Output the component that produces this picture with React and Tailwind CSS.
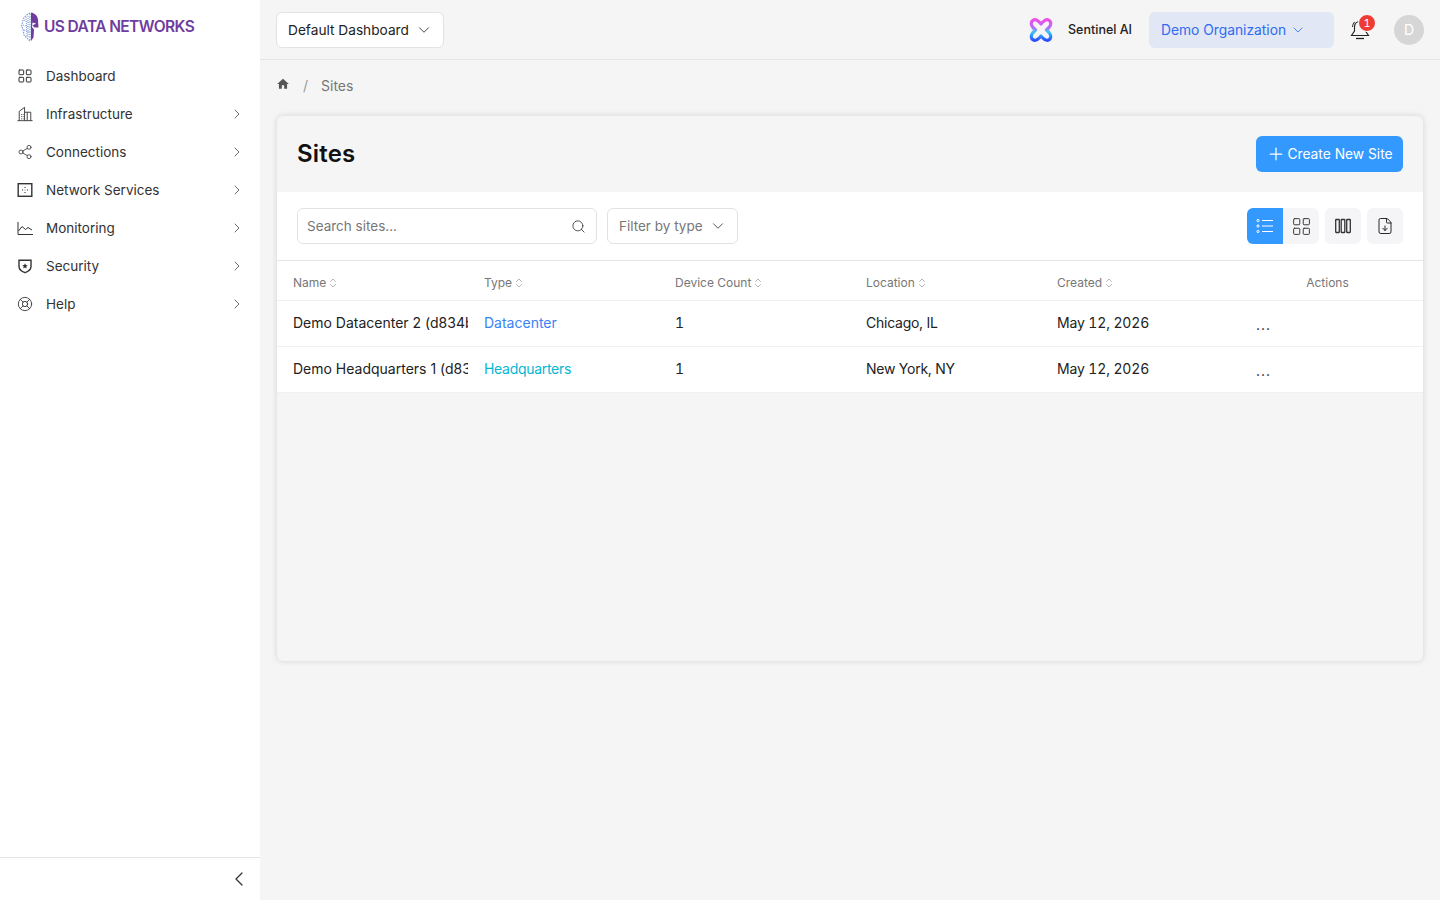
import React from 'react';
import {
  ChevronDown,
  ChevronRight,
  ChevronLeft,
  LayoutGrid,
  Share2,
  LifeBuoy,
  Search,
  Plus,
  FileDown,
  ChevronsUpDown,
} from 'lucide-react';

const font = 'font-["Inter","Noto_Sans",sans-serif]';

const BuildingIcon = () => (
  <svg width="18" height="18" viewBox="0 0 18 18" fill="none" stroke="#333" strokeWidth="1">
    <path d="M0.5 16.5h17" />
    <path d="M2.5 16.500V6L8.500 1.500v15" />
    <path d="M8.500 7h7v9.500" />
    <path d="M11.500 7v9.500" />
    <path d="M4.500 9.500h1M6.500 9.500h1M4.500 12h1M6.500 12h1M4.500 14.500h1M6.500 14.500h1" />
  </svg>
);

const ServicesIcon = () => (
  <svg width="16" height="16" viewBox="0 0 16 16" fill="none" stroke="#333" strokeWidth="1.4">
    <rect x="1.200" y="1.700" width="13.600" height="12.600" />
    <path d="M8 5v1M8 10v1M5 8h1M10 8h1M7.700 8h.6" strokeWidth="1.100" />
  </svg>
);

const ShieldIcon = () => (
  <svg width="16" height="16" viewBox="0 0 16 16" fill="none" stroke="#333" strokeWidth="1.400">
    <path d="M2 2.200h12v6.300c0 3-2.600 4.900-6 6.200-3.400-1.300-6-3.200-6-6.200z" />
    <path d="M8 5.300l.8 1.800 1.900.2-1.400 1.300.4 1.900L8 9.500l-1.700 1 .4-1.900-1.400-1.300 1.900-.2z" fill="#333" stroke="none" />
  </svg>
);

const MonitorIcon = () => (
  <svg width="16" height="16" viewBox="0 0 16 16" fill="none" stroke="#333" strokeWidth="1">
    <path d="M1 2v12.500h15" />
    <path d="M1.500 11L5 6.500l3.500 3L11 7.500l4 2.500" />
  </svg>
);

const HomeIcon = () => (
  <svg width="14" height="14" viewBox="0 0 24 24" fill="#555">
    <path d="M10 20v-6h4v6h5v-8h3L12 3 2 12h3v8z" />
  </svg>
);

const ListIcon = () => (
  <svg width="18" height="18" viewBox="0 0 18 18" fill="none" stroke="#fff" strokeWidth="1">
    <circle cx="2" cy="3.500" r="1.100" />
    <circle cx="2" cy="9" r="1.100" />
    <circle cx="2" cy="14.500" r="1.100" />
    <path d="M6 3.500h11M6 9h11M6 14.500h11" />
  </svg>
);

const Columns3Icon = () => (
  <svg width="18" height="18" viewBox="0 0 18 18" fill="none" stroke="#333" strokeWidth="1.300">
    <rect x="1.700" y="2.500" width="3.600" height="13" rx="0.500" />
    <rect x="7.200" y="2.500" width="3.600" height="13" rx="0.500" />
    <rect x="12.700" y="2.500" width="3.600" height="13" rx="0.500" />
  </svg>
);

const BellIcon = () => (
  <svg width="22" height="22" viewBox="0 0 22 22" fill="none" stroke="#222" strokeWidth="1.100">
    <path d="M11 2.500c-3.500 0-5.500 2.500-5.500 6v3.500L2.500 16.500h17L16.500 12V8.500c0-3.500-2-6-5.500-6z" />
    <path d="M7 19.500h8" strokeWidth="1.300" />
    <path d="M3.500 8c0-2 .8-3.500 2-5" />
  </svg>
);

const LogoMark = () => (
  <svg width="20" height="30" viewBox="0 0 20 30">
    <path d="M10 1C6 3 3 6 2.500 10l-1 4 1.500 3 1 6 6 6z" fill="none" stroke="#7f9ada" strokeWidth="1.200" strokeDasharray="1.500 1" />
    <path d="M4 8l5 3M3 13l6 2M4 18l5 2M6 5l1 19M8 4v22" stroke="#7f9ada" strokeWidth="1" strokeDasharray="1 1" fill="none" />
    <path d="M11 0.500c3.500.5 6.500 3 7 7l.5 8h-4l-2-2 3.500-2-3.500-1-.5 4.500 2 2.500-.5 8L11 29z" fill="#6f3d9e" />
  </svg>
);

const SentinelMark = () => (
  <svg width="26" height="26" viewBox="0 0 26 26" fill="none">
    <defs>
      <linearGradient id="sentinelGrad" x1="0.500" y1="0" x2="0.500" y2="1">
        <stop offset="0" stopColor="#f04fe6" />
        <stop offset="0.4" stopColor="#b46bff" />
        <stop offset="0.6" stopColor="#38c8f5" />
        <stop offset="1" stopColor="#2b4dff" />
      </linearGradient>
    </defs>
    <path
      d="M5.500 3c2.500-1.200 4.500.5 7.500 4 3-3.500 5-5.200 7.500-4 2.800 1.400 3 4.500.5 7.500L18.500 13l2.500 2.500c2.500 3 2.300 6.100-.5 7.500-2.500 1.200-4.500-.5-7.500-4-3 3.500-5 5.200-7.500 4-2.800-1.400-3-4.500-.5-7.500L7.500 13 5 10.500C2.500 7.500 2.700 4.400 5.500 3z"
      stroke="url(#sentinelGrad)"
      strokeWidth="3.200"
      strokeLinejoin="round"
    />
  </svg>
);

const navItems = [
  { label: 'Dashboard', icon: <LayoutGrid size={16} strokeWidth={1.5} color="#333" /> },
  { label: 'Infrastructure', icon: <BuildingIcon />, more: true },
  { label: 'Connections', icon: <Share2 size={18} strokeWidth={1.2} color="#333" />, more: true },
  { label: 'Network Services', icon: <ServicesIcon />, more: true },
  { label: 'Monitoring', icon: <MonitorIcon />, more: true },
  { label: 'Security', icon: <ShieldIcon />, more: true },
  { label: 'Help', icon: <LifeBuoy size={18} strokeWidth={1.3} color="#333" />, more: true },
];

const columns = ['Name', 'Type', 'Device Count', 'Location', 'Created'];

const sites = [
  {
    name: 'Demo Datacenter 2 (d834b1c7)',
    type: 'Datacenter',
    typeClass: 'text-[#3b82f6]',
    count: 1,
    location: 'Chicago, IL',
    created: 'May 12, 2026',
  },
  {
    name: 'Demo Headquarters 1 (d83a20f4)',
    type: 'Headquarters',
    typeClass: 'text-[#06b6d4] tracking-[-0.3px]',
    count: 1,
    location: 'New York, NY',
    created: 'May 12, 2026',
  },
];

const Sidebar = () => (
  <aside className="w-[260px] shrink-0 h-full bg-white flex flex-col">
    <div className="h-[57px] pl-[20px] pb-[5px] pt-[1px] flex items-center gap-[4px]">
      <LogoMark />
      <span className="text-[15.500px] font-semibold text-[#6f3d9e] tracking-[-0.6px]">US DATA NETWORKS</span>
    </div>
    <nav className="flex-1 flex flex-col">
      {navItems.map((item) => (
        <div key={item.label} className="h-[38px] pl-[17px] pr-[15px] flex items-center text-[#333] text-[13.500px]">
          <span className="w-[16px] flex justify-center">{item.icon}</span>
          <span className="ml-[13px] flex-1">{item.label}</span>
          {item.more && <ChevronRight size={16} strokeWidth={1.200} color="#444" />}
        </div>
      ))}
    </nav>
    <div className="h-[43px] border-t border-[#e5e5e5] flex items-center justify-end pr-[9px]">
      <ChevronLeft size={24} strokeWidth={1.300} color="#333" />
    </div>
  </aside>
);

const Header = () => (
  <header className="h-[60px] shrink-0 border-b border-[#e5e5e5] pl-[16px] pr-[16px] flex items-center">
    <button className="h-[36px] w-[168px] pl-[11px] pr-[10px] pt-[1px] bg-white border border-[#e2e2e2] rounded-md flex items-center justify-between text-[13.700px] text-[#222]">
      Default Dashboard
      <ChevronDown size={18} strokeWidth={1.200} color="#333" />
    </button>
    <div className="ml-auto flex items-center">
      <SentinelMark />
      <span className="ml-[14px] mt-[1px] text-[12.500px] font-medium text-[#222]">Sentinel AI</span>
      <button className="ml-[17px] h-[36px] w-[185px] pl-[12px] pt-[1px] bg-[#e1e7f5] rounded-md flex items-center gap-[4px] text-[13.800px] text-[#2f6bf0]">
        Demo Organization
        <ChevronDown size={16} strokeWidth={1.200} />
      </button>
      <div className="relative ml-[15px] w-[22px] h-[22px] mt-[1px]">
        <BellIcon />
        <span className="absolute -top-[5px] left-[9px] w-[18px] h-[18px] rounded-full bg-[#ef3b36] border border-white text-white text-[11px] tabular-nums flex items-center justify-center">
          1
        </span>
      </div>
      <div className="ml-[23px] w-[30px] h-[30px] rounded-full bg-[#d6d6d6] text-white text-[14px] flex items-center justify-center">
        D
      </div>
    </div>
  </header>
);

const ToolButton = ({ children, className }) => (
  <button className={`w-[36px] h-[36px] flex items-center justify-center ${className}`}>{children}</button>
);

const SitesCard = () => (
  <section className="mt-[21px] h-[545px] rounded-md shadow-[0_0_6px_rgba(0,0,0,0.14)] overflow-hidden flex flex-col">
    <div className="h-[76px] shrink-0 px-[20px] flex items-center justify-between">
      <h1 className="text-[24px] font-semibold text-[#111] tracking-[0.2px]">Sites</h1>
      <button className="h-[36px] w-[147px] bg-[#3399ff] rounded-md text-white text-[13.800px] flex items-center justify-center gap-[1px]">
        <Plus size={20} strokeWidth={1.500} />
        Create New Site
      </button>
    </div>
    <div className="h-[69px] shrink-0 bg-white border-b border-[#e5e5e8] px-[20px] flex items-center">
      <div className="w-[300px] h-[36px] border border-[#e2e2e2] rounded-md pl-[9px] pr-[10px] flex items-center justify-between text-[13.500px] text-[#777]">
        Search sites...
        <Search size={15} strokeWidth={1.300} color="#333" />
      </div>
      <div className="ml-[10px] w-[131px] h-[36px] border border-[#e2e2e2] rounded-md pl-[11px] pr-[10px] flex items-center justify-between text-[13.500px] text-[#777]">
        Filter by type
        <ChevronDown size={18} strokeWidth={1.200} color="#444" />
      </div>
      <div className="ml-auto flex items-center gap-[6px]">
        <div className="flex">
          <ToolButton className="bg-[#3399ff] rounded-l-md">
            <ListIcon />
          </ToolButton>
          <ToolButton className="bg-[#f5f5f7] rounded-r-md">
            <LayoutGrid size={21} strokeWidth={1.100} color="#333" />
          </ToolButton>
        </div>
        <ToolButton className="bg-[#f5f5f7] rounded-md">
          <Columns3Icon />
        </ToolButton>
        <ToolButton className="bg-[#f5f5f7] rounded-md">
          <FileDown size={18} strokeWidth={1.300} color="#222" />
        </ToolButton>
      </div>
    </div>
    <table className="w-full table-fixed bg-white border-collapse">
      <thead>
        <tr className="h-[39px] border-b border-[#f0f0f0] text-left">
          {columns.map((col) => (
            <th key={col} className="pl-[16px] pt-[5px] font-normal text-[12px] text-[#777]">
              <span className="flex items-center gap-[1px]">
                {col}
                <ChevronsUpDown size={12} strokeWidth={1.100} />
              </span>
            </th>
          ))}
          <th className="pt-[5px] font-normal text-[12px] text-[#777] text-center">Actions</th>
        </tr>
      </thead>
      <tbody>
        {sites.map((site) => (
          <tr key={site.type} className="h-[46px] border-b border-[#f0f0f0] text-[14px] text-[#222]">
            <td className="pl-[16px] pb-[2px] overflow-hidden whitespace-nowrap">{site.name}</td>
            <td className={`pl-[16px] pb-[2px] ${site.typeClass}`}>{site.type}</td>
            <td className="pl-[16px] pb-[2px] tabular-nums">{site.count}</td>
            <td className="pl-[16px] pb-[2px] tracking-[-0.25px]">{site.location}</td>
            <td className="pl-[16px] pb-[2px] tabular-nums tracking-[-0.15px]">{site.created}</td>
            <td className="pl-[24px] pt-[2px]">
              <span className="tracking-[1px]">...</span>
            </td>
          </tr>
        ))}
      </tbody>
    </table>
  </section>
);

const App = () => (
  <div className={`w-[1440px] h-[900px] flex bg-[#f5f5f5] overflow-hidden ${font}`}>
    <Sidebar />
    <main className="flex-1 min-w-0 flex flex-col">
      <Header />
      <div className="pl-[17px] pr-[17px] pt-[15px]">
        <div className="h-[20px] flex items-center text-[14px] text-[#777]">
          <span className="-mt-[3px] -ml-[1px]">
            <HomeIcon />
          </span>
          <span className="ml-[13px] text-[#999]">/</span>
          <span className="ml-[13px]">Sites</span>
        </div>
        <SitesCard />
      </div>
    </main>
  </div>
);

export default App;
